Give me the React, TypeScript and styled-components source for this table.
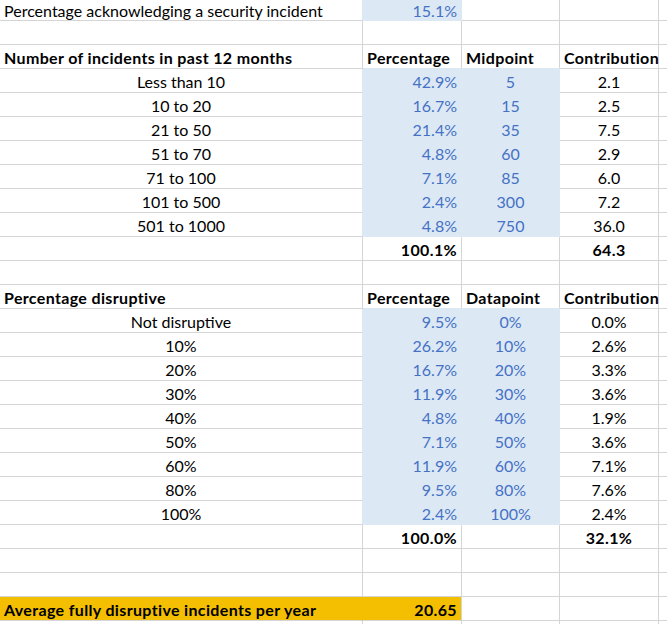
import React from "react";
import styled, { createGlobalStyle } from "styled-components";

const GRID = "#d5d5d5";
const BLUE_FILL = "#dde8f5";
const BLUE_TEXT = "#4472c4";
const GOLD = "#f3bf00";

const Global = createGlobalStyle`
  html, body { margin: 0; padding: 0; background: #fff; }
  body { font-family: Lato, "Liberation Sans", sans-serif; overflow: hidden; }
`;

const Sheet = styled.div`
  display: flex;
  flex-direction: column;
  width: 667px;
  height: 624px;
  overflow: hidden;
  background: #fff;
`;

const Row = styled.div<{ $h?: number }>`
  display: grid;
  grid-template-columns: 363px 99px 98px 99px 1fr;
  height: ${(p) => p.$h ?? 24}px;
  flex: none;
`;

type Fill = "blue" | "gold" | undefined;
const fillColor = (f: Fill) => (f === "blue" ? BLUE_FILL : f === "gold" ? GOLD : "transparent");

const Cell = styled.div<{
  $align?: "left" | "center" | "right";
  $bold?: boolean;
  $fill?: Fill;
  $ink?: "blue" | "black";
  $rightLine?: string;
  $bottomLine?: string;
}>`
  box-sizing: border-box;
  display: flex;
  align-items: center;
  justify-content: ${(p) =>
    p.$align === "center" ? "center" : p.$align === "right" ? "flex-end" : "flex-start"};
  padding: 2px 4px 0 4px;
  font-size: 16px;
  line-height: 1;
  white-space: nowrap;
  overflow: visible;
  font-weight: ${(p) => (p.$bold ? 700 : 400)};
  letter-spacing: ${(p) => (p.$bold ? "0.35px" : "0")};
  color: ${(p) => (p.$ink === "blue" ? BLUE_TEXT : "#000")};
  background: ${(p) => fillColor(p.$fill)};
  border-right: 1px solid ${(p) => p.$rightLine ?? GRID};
  border-bottom: 1px solid ${(p) => p.$bottomLine ?? GRID};
`;

type C = {
  t?: string;
  align?: "left" | "center" | "right";
  bold?: boolean;
  fill?: Fill;
  ink?: "blue" | "black";
  right?: string;
  bottom?: string;
};
type R = { h?: number; cells: C[] };

const blank = (): C[] => [{}, {}, {}, {}, {}];

const header = (label: string, third: string, belowFilled: boolean): C[] => [
  { t: label, bold: true },
  { t: "Percentage", bold: true, bottom: belowFilled ? BLUE_FILL : undefined },
  { t: third, bold: true, bottom: belowFilled ? BLUE_FILL : undefined },
  { t: "Contribution", bold: true },
  {},
];

const dataRow = (label: string, pct: string, mid: string, contrib: string): C[] => [
  { t: label, align: "center", right: BLUE_FILL },
  { t: pct, align: "right", fill: "blue", ink: "blue", right: BLUE_FILL, bottom: BLUE_FILL },
  { t: mid, align: "center", fill: "blue", ink: "blue", right: BLUE_FILL, bottom: BLUE_FILL },
  { t: contrib, align: "center" },
  {},
];

const totalRow = (pct: string, contrib: string): C[] => [
  {},
  { t: pct, align: "right", bold: true },
  {},
  { t: contrib, align: "center", bold: true },
  {},
];

const incidents: [string, string, string, string][] = [
  ["Less than 10", "42.9%", "5", "2.1"],
  ["10 to 20", "16.7%", "15", "2.5"],
  ["21 to 50", "21.4%", "35", "7.5"],
  ["51 to 70", "4.8%", "60", "2.9"],
  ["71 to 100", "7.1%", "85", "6.0"],
  ["101 to 500", "2.4%", "300", "7.2"],
  ["501 to 1000", "4.8%", "750", "36.0"],
];

const disruptive: [string, string, string, string][] = [
  ["Not disruptive", "9.5%", "0%", "0.0%"],
  ["10%", "26.2%", "10%", "2.6%"],
  ["20%", "16.7%", "20%", "3.3%"],
  ["30%", "11.9%", "30%", "3.6%"],
  ["40%", "4.8%", "40%", "1.9%"],
  ["50%", "7.1%", "50%", "3.6%"],
  ["60%", "11.9%", "60%", "7.1%"],
  ["80%", "9.5%", "80%", "7.6%"],
  ["100%", "2.4%", "100%", "2.4%"],
];

const rows: R[] = [
  {
    h: 21,
    cells: [
      { t: "Percentage acknowledging a security incident", right: BLUE_FILL },
      { t: "15.1%", align: "right", fill: "blue", ink: "blue", right: BLUE_FILL, bottom: BLUE_FILL },
      {},
      {},
      {},
    ],
  },
  { cells: blank() },
  { cells: header("Number of incidents in past 12 months", "Midpoint", true) },
  ...incidents.map((r) => ({ cells: dataRow(...r) })),
  { cells: totalRow("100.1%", "64.3") },
  { cells: blank() },
  { cells: header("Percentage disruptive", "Datapoint", true) },
  ...disruptive.map((r) => ({ cells: dataRow(...r) })),
  { cells: totalRow("100.0%", "32.1%") },
  { cells: blank() },
  { cells: blank() },
  {
    cells: [
      { t: "Average fully disruptive incidents per year", bold: true, fill: "gold", right: GOLD },
      { t: "20.65", align: "right", bold: true, fill: "gold" },
      {},
      {},
      {},
    ],
  },
  { cells: blank() },
];

export default function App() {
  return (
    <>
      <Global />
      <Sheet>
        {rows.map((r, i) => (
          <Row key={i} $h={r.h}>
            {r.cells.map((c, j) => (
              <Cell
                key={j}
                $align={c.align}
                $bold={c.bold}
                $fill={c.fill}
                $ink={c.ink}
                $rightLine={c.right}
                $bottomLine={c.bottom}
              >
                {c.t}
              </Cell>
            ))}
          </Row>
        ))}
      </Sheet>
    </>
  );
}
